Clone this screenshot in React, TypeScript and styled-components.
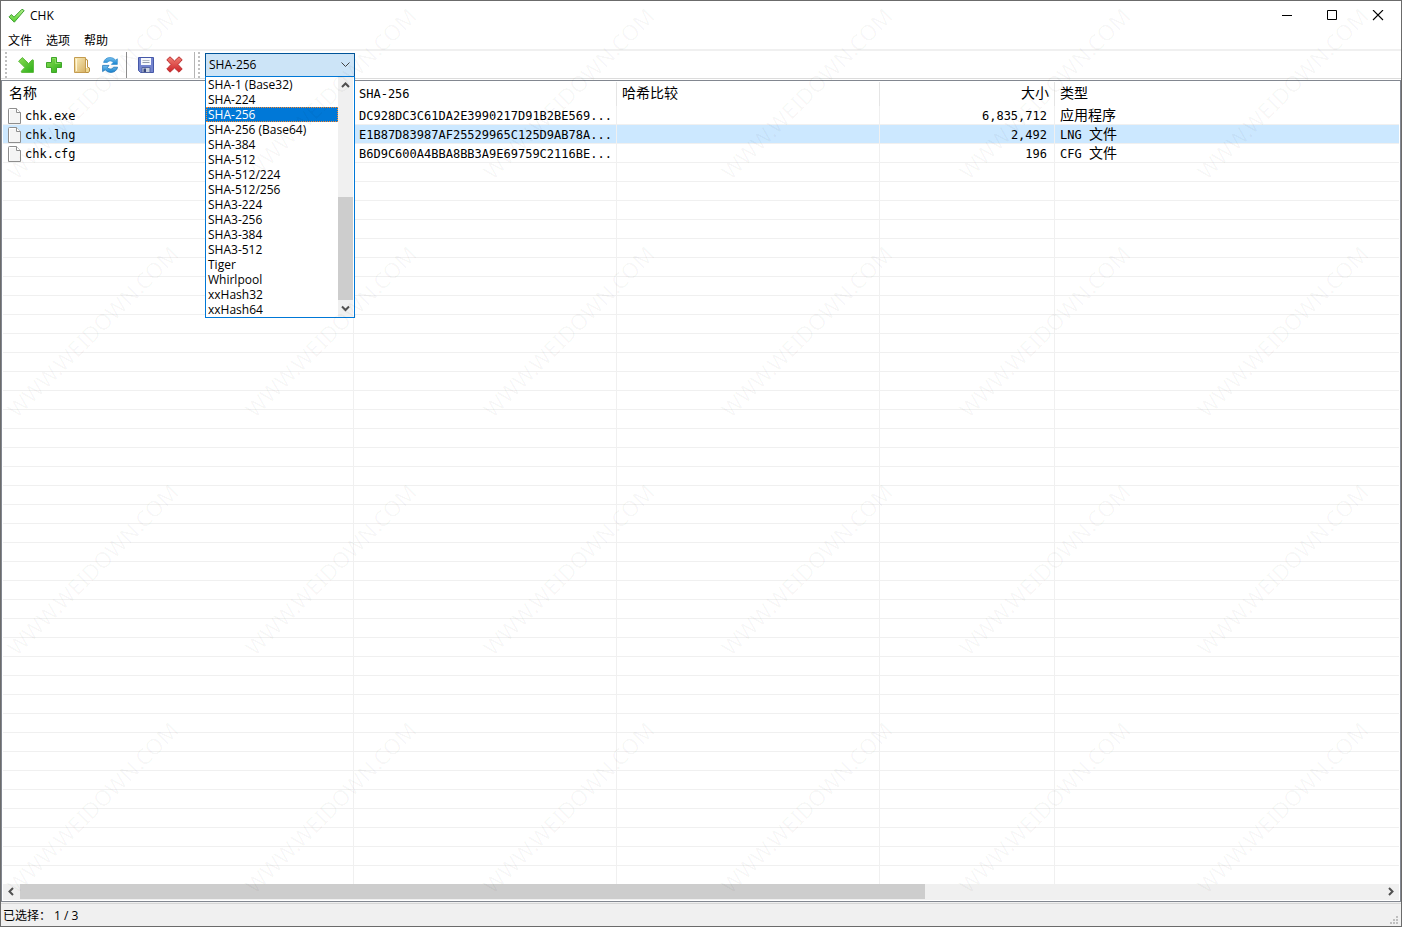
import React, { useState } from "react";
import styled, { createGlobalStyle } from "styled-components";

const uiFont = `"Open Sans", "Noto Sans CJK SC", sans-serif`;
const monoFont = `"DejaVu Sans Mono", "Noto Sans CJK SC", monospace`;
const gridLine = "#f0f0f0";
const frame = "#828790";

const GlobalStyle = createGlobalStyle`
  *, *::before, *::after { box-sizing: border-box; }
  body { margin: 0; background: #fff; color: #000; font: 12px/16px ${uiFont}; }
  button { font: inherit; color: inherit; background: none; border: 0; margin: 0; padding: 0; }
  svg { display: block; }
`;

const Window = styled.div`
  position: relative;
  display: flex;
  flex-direction: column;
  min-height: 100vh;
  border: 1px solid #6b6b6b;
  background: #fff;
  overflow: hidden;
`;

const TitleBar = styled.header`
  display: flex;
  align-items: center;
  height: 29px;
  padding-left: 7px;
`;

const Title = styled.h1`
  flex: 1;
  margin: 0 0 0 5px;
  font-size: 12px;
  font-weight: 400;
`;

const CaptionButton = styled.button`
  display: grid;
  place-items: center;
  width: 46px;
  height: 29px;
`;

const MenuBar = styled.nav`
  display: flex;
  align-items: center;
  gap: 14px;
  height: 19px;
  padding: 2px 7px 0;
`;

const Toolbar = styled.div`
  display: flex;
  align-items: center;
  height: 30px;
  padding-left: 4px;
  border-top: 2px solid #f0f0f0;
  border-bottom: 1px solid #dcdcdc;
`;

const Grip = styled.span`
  width: 2px;
  height: 26px;
  margin-right: 5px;
  background: repeating-linear-gradient(#c0c0c0 0 2px, transparent 2px 4px);
`;

const ToolButton = styled.button`
  display: grid;
  place-items: center;
  width: 28px;
  height: 24px;
`;

const Divider = styled.span<{ $tone: string; $before: number; $after: number }>`
  width: 1px;
  height: 26px;
  margin-left: ${(p) => p.$before}px;
  margin-right: ${(p) => p.$after}px;
  background: ${(p) => p.$tone};
`;

const Combo = styled.div`
  position: relative;
  width: 150px;
  height: 24px;
`;

const ComboSelect = styled.select`
  appearance: none;
  width: 100%;
  height: 24px;
  padding: 0 20px 0 3px;
  border: 1px solid #005499;
  border-radius: 0;
  background: #cce4f7;
  color: #000;
  font: 12px/16px ${uiFont};
  outline: none;
`;

const ComboArrow = styled.svg`
  position: absolute;
  right: 5px;
  top: 9px;
  pointer-events: none;
`;

const DropDown = styled.div`
  position: absolute;
  z-index: 2;
  top: 23px;
  left: 0;
  display: flex;
  width: 150px;
  border: 1px solid #0078d7;
  background: #fff;
`;

const OptionList = styled.ul`
  flex: 1;
  margin: 0;
  padding: 0;
  list-style: none;
`;

const Option = styled.li<{ $selected: boolean }>`
  height: 15px;
  padding: 0 1px;
  line-height: 13px;
  white-space: nowrap;
  border: 1px ${(p) => (p.$selected ? "dotted #ff8728" : "solid transparent")};
  background: ${(p) => (p.$selected ? "#0078d7" : "transparent")};
  color: ${(p) => (p.$selected ? "#fff" : "#000")};
`;

const VScroll = styled.div`
  display: grid;
  grid-template-rows: 17px 1fr 103px 17px;
  justify-items: center;
  align-items: center;
  width: 15px;
  margin-right: 1px;
  background: #f0f0f0;
`;

const VThumb = styled.span`
  grid-row: 3;
  width: 100%;
  height: 100%;
  background: #cdcdcd;
`;

const ListView = styled.main`
  flex: 1;
  display: flex;
  flex-direction: column;
  margin-top: 1px;
  padding: 1px;
  border: 1px solid ${frame};
`;

const FileTable = styled.table`
  width: 100%;
  table-layout: fixed;
  border-collapse: separate;
  border-spacing: 0;
  font: 12px/16px ${monoFont};
`;

const HeadCell = styled.th<{ $right?: boolean }>`
  height: 24px;
  padding: 0 5px;
  border-right: 1px solid #e5e5e5;
  font-weight: 400;
  text-align: ${(p) => (p.$right ? "right" : "left")};
  &:first-child { padding-left: 6px; }
  &:last-child { border-right: 0; }
`;

const Row = styled.tr<{ $selected: boolean }>`
  background: ${(p) => (p.$selected ? "#cce8ff" : "transparent")};
`;

const Cell = styled.td<{ $right?: boolean }>`
  height: 19px;
  padding: 1px 7px 0 5px;
  border-right: 1px solid ${gridLine};
  border-bottom: 1px solid ${gridLine};
  text-align: ${(p) => (p.$right ? "right" : "left")};
  white-space: nowrap;
  overflow: hidden;
  &:last-child { border-right: 0; }
`;

const FileName = styled.span`
  display: flex;
  align-items: center;
  gap: 3px;
`;

const Han = styled.span`
  font-size: 14px;
  line-height: 12px;
`;

const EmptyRows = styled.div`
  flex: 1;
  min-height: 38px;
  display: flex;
  background: repeating-linear-gradient(transparent 0 18px, ${gridLine} 18px 19px);
`;

const EmptyColumn = styled.div<{ $width: number }>`
  width: ${(p) => p.$width}px;
  border-right: 1px solid ${gridLine};
`;

const HScroll = styled.div`
  display: grid;
  grid-template-columns: 17px 905fr 457fr 17px;
  grid-template-rows: 15px;
  align-items: center;
  justify-items: center;
  height: 16px;
  background: #f0f0f0;
`;

const HThumb = styled.span`
  width: 100%;
  height: 100%;
  background: #cdcdcd;
`;

const StatusBar = styled.footer`
  display: flex;
  align-items: center;
  justify-content: space-between;
  height: 24px;
  padding: 4px 2px 1px;
  background: #f0f0f0;
  box-shadow: inset 0 1px #f0f0f0, inset 0 2px #d7d7d7;
`;

const SizeGrip = styled.svg`
  align-self: flex-end;
`;

const Watermark = styled.svg`
  position: absolute;
  z-index: 3;
  inset: 0;
  width: 100%;
  height: 100%;
  pointer-events: none;
`;

const CheckLogo = () => (
  <svg width="17" height="16" viewBox="0 0 17 16" aria-hidden="true">
    <defs>
      <linearGradient id="check" x1="0" y1="0" x2="0" y2="1">
        <stop offset="0" stopColor="#b4f08c" />
        <stop offset="1" stopColor="#55d02f" />
      </linearGradient>
    </defs>
    <path d="M1 8.9 3.4 6.5 6 9.2 14 1.2 16.2 2.6 6.3 14.2Z" fill="url(#check)" stroke="#3fa032" strokeLinejoin="round" />
  </svg>
);

const GreenFill = () => (
  <defs>
    <linearGradient id="green" x1="0" y1="0" x2="1" y2="1">
      <stop offset="0" stopColor="#8bdc55" />
      <stop offset="1" stopColor="#2bae18" />
    </linearGradient>
  </defs>
);

const ArrowIcon = () => (
  <svg width="16" height="16" viewBox="0 0 16 16" aria-hidden="true">
    <GreenFill />
    <path d="M.6 4.2 4.4.6 10.6 6.6 14.2 2.8 15.4 3.2V15.4H3.6L3.2 14.2 6.9 10.5Z" fill="url(#green)" stroke="#5ab83a" strokeLinejoin="round" />
  </svg>
);

const PlusIcon = () => (
  <svg width="16" height="16" viewBox="0 0 16 16" aria-hidden="true">
    <path d="M5.5.5H10.5V5.5H15.5V10.5H10.5V15.5H5.5V10.5H.5V5.5H5.5Z" fill="url(#green)" stroke="#3fa62a" strokeLinejoin="round" />
    <path d="M6.5 1.5H9.5V6.5H14.5" fill="none" stroke="#a5e87c" opacity=".6" />
  </svg>
);

const FolderIcon = () => (
  <svg width="16" height="16" viewBox="0 0 16 16" aria-hidden="true">
    <defs>
      <linearGradient id="folder" x1="0" y1="0" x2="1" y2="1">
        <stop offset="0" stopColor="#fbeebd" />
        <stop offset="1" stopColor="#d6b164" />
      </linearGradient>
    </defs>
    <path d="M11 1.5 13.5 3V10L15.5 11V14L14.5 15.5H11Z" fill="#f0d890" stroke="#b99043" />
    <path d="M.5.5H11.5V15.5H.5Z" fill="url(#folder)" stroke="#c49c50" />
    <path d="M2.5 14V2" stroke="#fff6d6" />
    <path d="M12.5 3.5V11" stroke="#fff" />
  </svg>
);

const RefreshIcon = () => (
  <svg width="17" height="16" viewBox="0 0 17 16" aria-hidden="true">
    <defs>
      <linearGradient id="refresh" x1="0" y1="0" x2="0" y2="1">
        <stop offset="0" stopColor="#77c0ee" />
        <stop offset="1" stopColor="#1683d0" />
      </linearGradient>
    </defs>
    <path d="M1.6 5.4C2.4 2.2 4.9.6 8 .6 10.4.6 12.4 1.5 13.6 3.2L15.3 1.8V7.4H9.4L11.2 5.4C9.5 3.4 7 3.4 5.4 5.4Z" fill="url(#refresh)" stroke="#3d93d1" strokeWidth=".8" strokeLinejoin="round" />
    <path d="M15.6 10.2C14.8 13.6 12.2 15.4 9 15.4 6.6 15.4 4.6 14.5 3.3 12.8L.6 14.6V8.4H7L5.4 10.6C7.2 12.6 10.2 12.4 11.6 10.2Z" fill="url(#refresh)" stroke="#2375b8" strokeWidth=".8" strokeLinejoin="round" />
  </svg>
);

const SaveIcon = () => (
  <svg width="16" height="16" viewBox="0 0 16 16" aria-hidden="true">
    <path d="M.5.5H15.5V15.5H2.5L.5 13.5Z" fill="#7384ce" stroke="#4658a8" />
    <path d="M3 1H13V8H3Z" fill="#f6f8fc" />
    <path d="M4.5 3.5H11.5" stroke="#b3b9c4" />
    <path d="M4.5 5.5H11.5" stroke="#929baa" />
    <path d="M4 10.5H12V15.5H4Z" fill="#cbd3df" stroke="#5363a1" />
    <path d="M5.5 11.5H8V15H5.5Z" fill="#38477f" />
  </svg>
);

const DeleteIcon = () => (
  <svg width="17" height="17" viewBox="0 0 17 17" aria-hidden="true">
    <defs>
      <linearGradient id="red" x1="0" y1="0" x2="0" y2="1">
        <stop offset="0" stopColor="#f08073" />
        <stop offset="1" stopColor="#cd2429" />
      </linearGradient>
    </defs>
    <path d="M4 .8 8.5 5 13 .8 16.2 3.8 12 8.5 16.2 13 13 16.2 8.5 12 4 16.2.8 13 5 8.5.8 3.8Z" fill="url(#red)" stroke="#bd3033" strokeLinejoin="round" />
  </svg>
);

const PageIcon = () => (
  <svg width="14" height="16" viewBox="0 0 14 16" aria-hidden="true">
    <path d="M.5 1.5Q.5.5 1.5.5H8.5L12.5 4.5V15.5H.5Z" fill="#f4f4f4" stroke="#8e8e8e" />
    <path d="M8.5.5V4.5H12.5" fill="#fff" stroke="#8e8e8e" />
    <path d="M1.5 14.5V1.5H7.5" fill="none" stroke="#fff" />
  </svg>
);

const chevrons = {
  up: "M1 6 4.5 2.5 8 6",
  down: "M1 2.5 4.5 6 8 2.5",
  left: "M6 1 2.5 4.5 6 8",
  right: "M3 1 6.5 4.5 3 8",
};

const Chevron = ({ to, className }: { to: keyof typeof chevrons; className?: string }) => (
  <svg className={className} width="9" height="9" viewBox="0 0 9 9" aria-hidden="true">
    <path d={chevrons[to]} fill="none" stroke="#505050" strokeWidth="2" />
  </svg>
);

const DownChevron = styled(Chevron)`
  grid-row: 4;
`;

const RightChevron = styled(Chevron)`
  grid-column: 4;
`;

const menus = ["文件", "选项", "帮助"];

const algorithms = [
  "SHA-1 (Base32)", "SHA-224", "SHA-256", "SHA-256 (Base64)", "SHA-384", "SHA-512",
  "SHA-512/224", "SHA-512/256", "SHA3-224", "SHA3-256", "SHA3-384", "SHA3-512",
  "Tiger", "Whirlpool", "xxHash32", "xxHash64",
];

const columns = [351, 263, 263, 175];

const files = [
  { name: "chk.exe", hash: "DC928DC3C61DA2E3990217D91B2BE569...", size: "6,835,712", type: <Han>应用程序</Han> },
  { name: "chk.lng", hash: "E1B87D83987AF25529965C125D9AB78A...", size: "2,492", type: <>LNG <Han>文件</Han></> },
  { name: "chk.cfg", hash: "B6D9C600A4BBA8BB3A9E69759C2116BE...", size: "196", type: <>CFG <Han>文件</Han></> },
];

const tile = 238;
const marks = Array.from({ length: 24 }, (_, i) => ({
  x: 16 + (i % 6) * tile,
  y: 180 + Math.floor(i / 6) * tile,
}));

export default function App() {
  const [algorithm, setAlgorithm] = useState("SHA-256");
  const [selected, setSelected] = useState("chk.lng");

  return (
    <Window>
      <GlobalStyle />
      <TitleBar>
        <CheckLogo />
        <Title>CHK</Title>
        <CaptionButton aria-label="最小化">
          <svg width="12" height="11"><path d="M2 5.5H12" stroke="#000" /></svg>
        </CaptionButton>
        <CaptionButton aria-label="最大化">
          <svg width="12" height="11"><path d="M1.5.5H10.5V9.5H1.5Z" fill="none" stroke="#000" /></svg>
        </CaptionButton>
        <CaptionButton aria-label="关闭">
          <svg width="12" height="11"><path d="M1 0 11 10M11 0 1 10" stroke="#000" strokeWidth="1.1" /></svg>
        </CaptionButton>
      </TitleBar>
      <MenuBar>
        {menus.map((m) => <button key={m}>{m}</button>)}
      </MenuBar>
      <Toolbar>
        <Grip />
        <ToolButton aria-label="打开"><ArrowIcon /></ToolButton>
        <ToolButton aria-label="添加文件"><PlusIcon /></ToolButton>
        <ToolButton aria-label="添加文件夹"><FolderIcon /></ToolButton>
        <ToolButton aria-label="刷新"><RefreshIcon /></ToolButton>
        <Divider $tone="#8c8c8c" $before={2} $after={5} />
        <ToolButton aria-label="保存"><SaveIcon /></ToolButton>
        <ToolButton aria-label="删除"><DeleteIcon /></ToolButton>
        <Divider $tone="#b4b4b4" $before={6} $after={3} />
        <Grip />
        <Combo>
          <ComboSelect aria-label="算法" value={algorithm} onChange={(e) => setAlgorithm(e.target.value)}>
            {algorithms.map((a) => <option key={a}>{a}</option>)}
          </ComboSelect>
          <ComboArrow width="9" height="6" aria-hidden="true">
            <path d="M.5.5 4.5 4.5 8.5.5" fill="none" stroke="#404040" />
          </ComboArrow>
          <DropDown>
            <OptionList role="listbox" aria-label="算法">
              {algorithms.map((a) => (
                <Option key={a} role="option" aria-selected={a === algorithm} $selected={a === algorithm} onClick={() => setAlgorithm(a)}>
                  {a}
                </Option>
              ))}
            </OptionList>
            <VScroll>
              <Chevron to="up" />
              <VThumb />
              <DownChevron to="down" />
            </VScroll>
          </DropDown>
        </Combo>
      </Toolbar>
      <ListView>
        <FileTable>
          <colgroup>
            {columns.map((w, i) => <col key={i} width={w} />)}
            <col />
          </colgroup>
          <thead>
            <tr>
              <HeadCell><Han>名称</Han></HeadCell>
              <HeadCell>SHA-256</HeadCell>
              <HeadCell><Han>哈希比较</Han></HeadCell>
              <HeadCell $right><Han>大小</Han></HeadCell>
              <HeadCell><Han>类型</Han></HeadCell>
            </tr>
          </thead>
          <tbody>
            {files.map((f) => (
              <Row key={f.name} $selected={f.name === selected} onClick={() => setSelected(f.name)}>
                <Cell><FileName><PageIcon />{f.name}</FileName></Cell>
                <Cell>{f.hash}</Cell>
                <Cell />
                <Cell $right>{f.size}</Cell>
                <Cell>{f.type}</Cell>
              </Row>
            ))}
          </tbody>
        </FileTable>
        <EmptyRows>
          {columns.map((w, i) => <EmptyColumn key={i} $width={w} />)}
        </EmptyRows>
        <HScroll>
          <Chevron to="left" />
          <HThumb />
          <RightChevron to="right" />
        </HScroll>
      </ListView>
      <StatusBar>
        <span>已选择： 1 / 3</span>
        <SizeGrip width="9" height="9" aria-hidden="true">
          <path d="M6 0h2v2h-2zM3 3h2v2h-2zM6 3h2v2h-2zM0 6h2v2h-2zM3 6h2v2h-2zM6 6h2v2h-2z" fill="#bfbfbf" />
        </SizeGrip>
      </StatusBar>
      <Watermark aria-hidden="true">
        {marks.map((m) => (
          <text key={`${m.x}-${m.y}`} transform={`translate(${m.x} ${m.y}) rotate(-45)`} fontSize="22" fontFamily="Noto Sans, sans-serif" fill="#000" fillOpacity=".035">
            WWW.WEIDOWN.COM
          </text>
        ))}
      </Watermark>
    </Window>
  );
}
